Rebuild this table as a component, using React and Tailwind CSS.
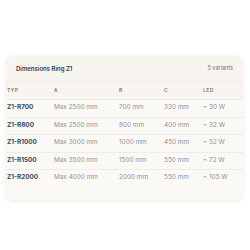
import React from 'react'

const rows = [
  { typ: 'Z1-R700', a: 'Max 2500 mm', b: '700 mm', c: '330 mm', led: '~ 30 W' },
  { typ: 'Z1-R800', a: 'Max 2500 mm', b: '800 mm', c: '400 mm', led: '~ 32 W' },
  { typ: 'Z1-R1000', a: 'Max 3000 mm', b: '1000 mm', c: '450 mm', led: '~ 52 W' },
  { typ: 'Z1-R1500', a: 'Max 3500 mm', b: '1500 mm', c: '550 mm', led: '~ 72 W' },
  { typ: 'Z1-R2000', a: 'Max 4000 mm', b: '2000 mm', c: '550 mm', led: '~ 105 W' },
]

const cols = 'grid grid-cols-[47px_65px_45px_39px_1fr] items-center pl-[1px]'

export default function App() {
  return (
    <div className="w-[250px] h-[250px] bg-white pt-[56px] pl-[6px] pr-[7px] font-['Inter',sans-serif]">
      <div className="rounded-lg bg-[#faf9f6] shadow-[0_1px_4px_rgba(60,40,20,0.10)] overflow-hidden pb-[13.5px]">
        {/* Header */}
        <div className="h-[26px] px-[10px] flex items-center justify-between bg-[#f8f4ef] border-b border-[#efe9e2]">
          <span className="text-[6px] font-semibold text-[#333d48]">Dimensions Ring Z1</span>
          <span className="text-[5.5px] text-[#6e6e6e]">5 variants</span>
        </div>

        {/* Table head */}
        <div className={`${cols} h-[17px] bg-[#f8f4ef] text-[5px] tracking-[0.08em] uppercase text-[#6b6b6b] font-medium`}>
          <span>Typ</span>
          <span>A</span>
          <span>B</span>
          <span>C</span>
          <span>LED</span>
        </div>

        {/* Rows */}
        {rows.map((r) => (
          <div key={r.typ} className={`${cols} h-[17.5px] border-t border-[#efebe6] text-[6.4px] text-[#929292]`}>
            <span className="font-bold text-[#3b4a5e]">{r.typ}</span>
            <span>{r.a}</span>
            <span>{r.b}</span>
            <span>{r.c}</span>
            <span>{r.led}</span>
          </div>
        ))}
      </div>
    </div>
  )
}
